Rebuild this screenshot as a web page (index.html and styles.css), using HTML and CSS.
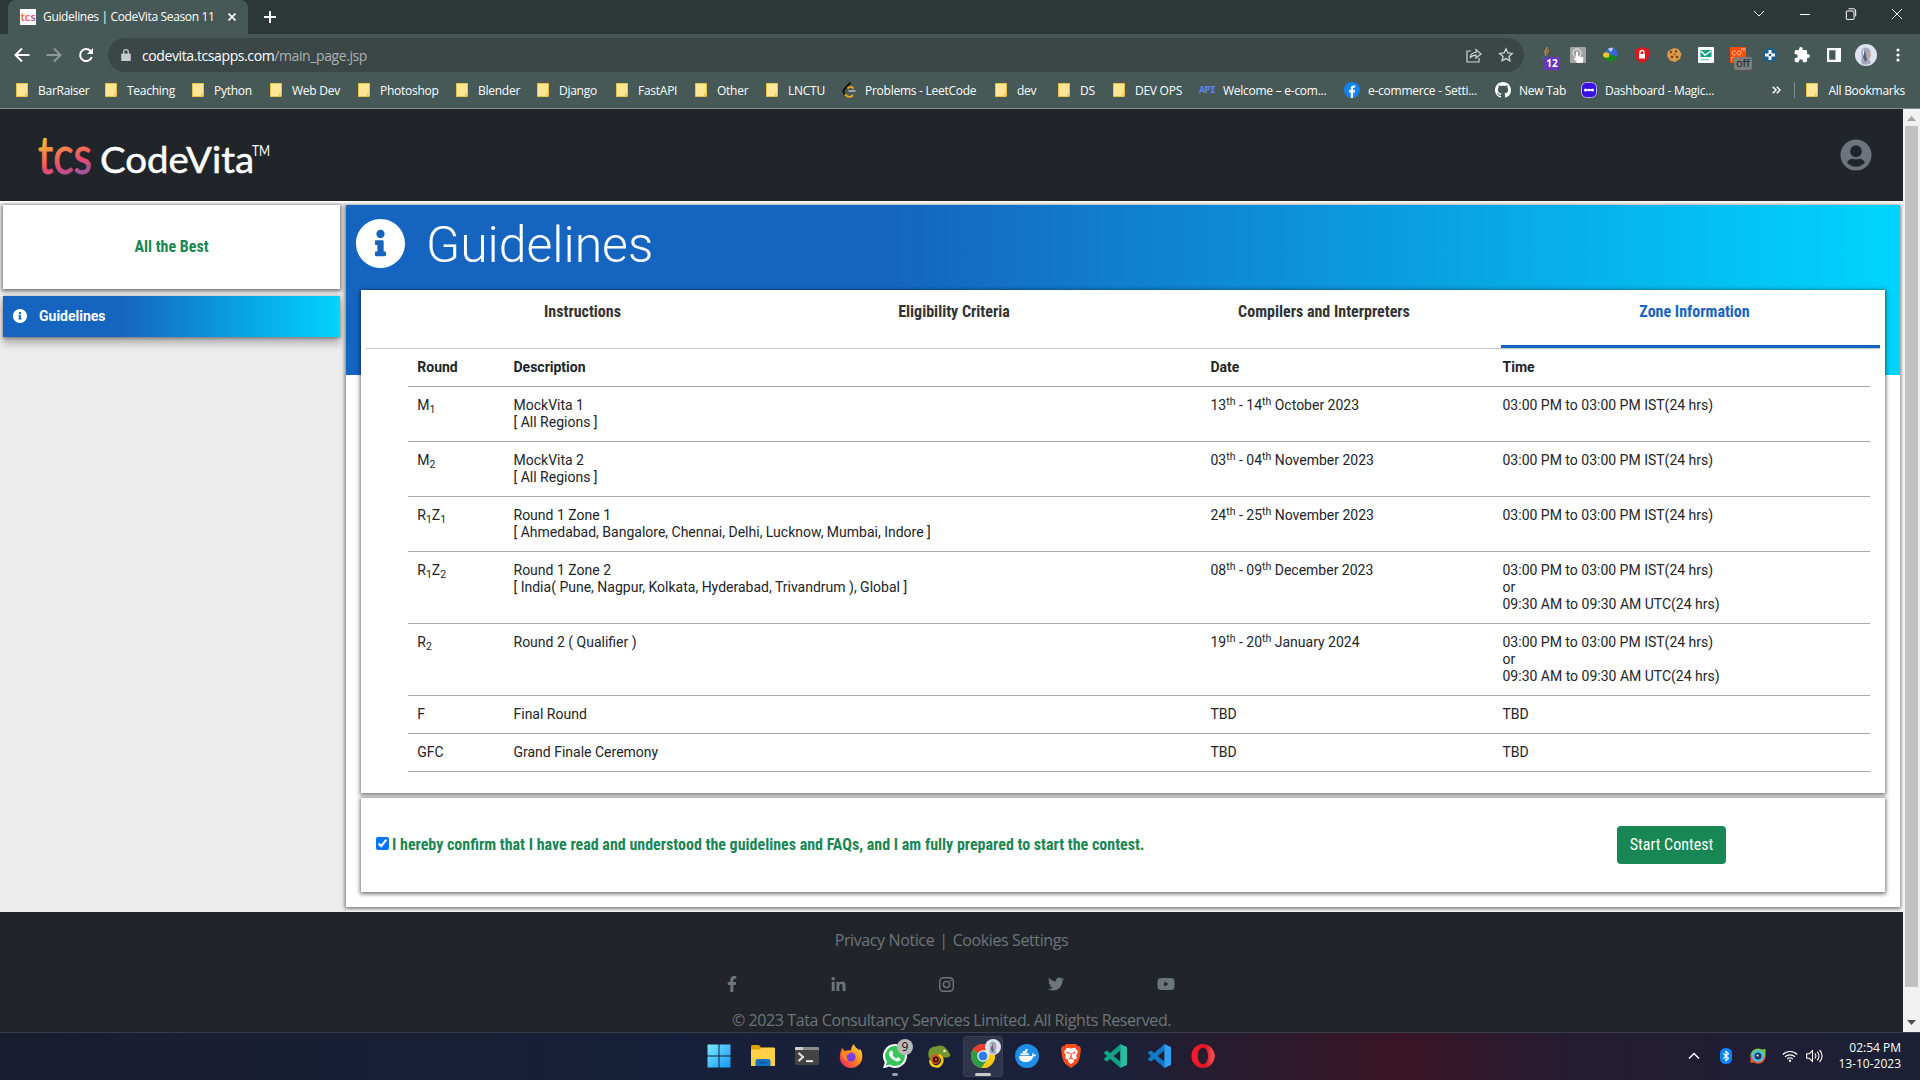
FILE: index.html
```html
<!DOCTYPE html>
<html lang="en">
<head>
<meta charset="utf-8">
<title>Guidelines | CodeVita Season 11</title>
<link rel="stylesheet" href="styles.css">
</head>
<body>
<svg class="defs" width="0" height="0" aria-hidden="true">
  <defs>
    <linearGradient id="gTcs" x1="0" y1="0" x2="1" y2="1"><stop offset="0" stop-color="#fdb827"/><stop offset=".35" stop-color="#f3704b"/><stop offset=".62" stop-color="#ee4a7d"/><stop offset=".85" stop-color="#7b57a5"/><stop offset="1" stop-color="#d14b8d"/></linearGradient>
    <linearGradient id="gLogo" gradientUnits="userSpaceOnUse" x1="14" y1="18" x2="26" y2="58"><stop offset="0" stop-color="#fdc52b"/><stop offset=".35" stop-color="#f5804a"/><stop offset=".7" stop-color="#ee4a70"/><stop offset="1" stop-color="#a455a0"/></linearGradient>
    <linearGradient id="gWin" x1="0" y1="0" x2="1" y2="1"><stop offset="0" stop-color="#7ce8ff"/><stop offset="1" stop-color="#1597f5"/></linearGradient>
    <linearGradient id="gFox" x1="1" y1="0" x2="0" y2="1"><stop offset="0" stop-color="#fff04a"/><stop offset=".45" stop-color="#ff8a1e"/><stop offset="1" stop-color="#f5156c"/></linearGradient>
    <linearGradient id="gOpera" x1="0" y1="0" x2="1" y2="0"><stop offset="0" stop-color="#ff1b2d"/><stop offset=".6" stop-color="#e01225"/><stop offset="1" stop-color="#ff5a5a"/></linearGradient>
    <symbol id="folder" viewBox="0 0 12 14"><path d="M.5.5h11v10.3h-.9v2.7H.5z" fill="#ffe694" stroke="#e9c24a"/><path d="M9.5 13.2v-2.4h2v2.4z" fill="#ffe694" stroke="#e9c24a"/></symbol>
    <symbol id="info" viewBox="8 8 496 496"><path fill="#fff" d="M256 8C119.043 8 8 119.083 8 256c0 136.997 111.043 248 248 248s248-111.003 248-248C504 119.083 392.957 8 256 8zm0 110c23.196 0 42 18.804 42 42s-18.804 42-42 42-42-18.804-42-42 18.804-42 42-42zm56 254c0 6.627-5.373 12-12 12h-88c-6.627 0-12-5.373-12-12v-24c0-6.627 5.373-12 12-12h12v-64h-12c-6.627 0-12-5.373-12-12v-24c0-6.627 5.373-12 12-12h64c6.627 0 12 5.373 12 12v100h12c6.627 0 12 5.373 12 12v24z"/></symbol>
    <symbol id="vscode" viewBox="0 0 24 24"><path d="M17.5 0v6.2L4.2 17.6l-3-1.6-.1-1.5z" /><path d="M17.5 24v-6.2L4.2 6.4l-3 1.6-.1 1.5z" /><path class="vs-side" d="M17.3 0 24 3v18l-6.7 3z"/></symbol>
    <symbol id="avatar" viewBox="0 0 22 22"><circle cx="11" cy="11" r="11" fill="#dfe3f0"/><path d="M7 20c-1-3-1-5 0-7-1-3-1-7 1-9 2-1 5-1 7 2l1 6-2 3 2 4c-3 2-6 2-9 1z" fill="#a3a9bb"/><path d="M10 6l1 6 1 4-2 2-2-5z" fill="#566079"/><path d="M13 8c2 0 3 2 2 5l-2 1z" fill="#d7a08d"/><path d="M8 3l1 6-1 3z" fill="#f6f7fb"/></symbol>
  </defs>
</svg>

<div class="screen">
  <header class="tabstrip">
    <div class="tab">
      <svg class="favicon" width="16" height="16" viewBox="0 0 16 16"><path fill="#fff" d="M0 0h16v16H0z"/><text x="0.5" y="12" textLength="15" lengthAdjust="spacingAndGlyphs" class="fav-text">tcs</text></svg>
      <span class="tab-title">Guidelines | CodeVita Season 11</span>
      <svg width="8" height="8" viewBox="0 0 8 8"><path d="M.5.5l7 7M7.5.5l-7 7" stroke="#fff" stroke-width="1.6"/></svg>
    </div>
    <svg class="newtab" width="12" height="12" viewBox="0 0 12 12"><path d="M6 0v12M0 6h12" stroke="#fff" stroke-width="2"/></svg>
    <div class="winctl">
      <svg width="12" height="12" viewBox="0 0 12 12"><path d="M1 3l5 5 5-5" fill="none" stroke="#fff"/></svg>
      <svg width="12" height="12" viewBox="0 0 12 12"><path d="M1 6.5h10" stroke="#fff"/></svg>
      <svg width="12" height="12" viewBox="0 0 12 12"><path d="M3.5.8h5a2.2 2.2 0 0 1 2.2 2.2v5.5M1.5 3h6.800a.7.7 0 0 1 .7.7v7a.7.700 0 0 1-.7.7H2a.7.700 0 0 1-.7-.7V3.500z" fill="none" stroke="#fff"/></svg>
      <svg width="12" height="12" viewBox="0 0 12 12"><path d="M1 1l10 10M11 1L1 11" stroke="#fff"/></svg>
    </div>
  </header>

  <div class="toolbar">
    <div class="nav">
      <svg width="16" height="16" viewBox="0 0 16 16"><path d="M15.500 8H2M8 1.500L1.500 8 8 14.500" fill="none" stroke="#fff" stroke-width="2"/></svg>
      <svg width="16" height="16" viewBox="0 0 16 16"><path d="M.5 8H14M8 1.500L14.500 8 8 14.500" fill="none" stroke="#8d9a99" stroke-width="2"/></svg>
      <svg width="16" height="16" viewBox="0 0 16 16"><path d="M13.800 10A6 6 0 1 1 12.600 4.100L14 5.500" fill="none" stroke="#fff" stroke-width="2"/><path d="M15 1v6H9z" fill="#fff"/></svg>
    </div>
    <div class="omnibox">
      <svg width="10" height="12" viewBox="0 0 10 12"><path d="M1 4.500h8a.8.8 0 0 1 .8.8v6a.7.700 0 0 1-.7.7H.9a.7.700 0 0 1-.7-.7v-6A.8.800 0 0 1 1 4.500z" fill="#c5caca"/><path d="M2.700 5V3a2.300 2.300 0 0 1 4.600 0v2" fill="none" stroke="#c5caca" stroke-width="1.300"/></svg>
      <span class="url">codevita.tcsapps.com<span class="path">/main_page.jsp</span></span>
      <div class="omni-actions">
        <svg width="16" height="16" viewBox="0 0 16 16"><path d="M5 4H1v11h12v-4M4 11c.5-3.500 3-5.500 6-5.500V2.500L15 7l-5 4V8.200C7.500 8.200 5.500 9 4 11z" fill="none" stroke="#d0d5d4" stroke-width="1.200"/></svg>
        <svg width="16" height="16" viewBox="0 0 16 16"><path d="M8 1.800l1.900 4.100 4.400.5-3.300 3 .9 4.400L8 11.600l-3.900 2.200.9-4.400-3.300-3 4.400-.5z" fill="none" stroke="#d0d5d4" stroke-width="1.300"/></svg>
      </div>
    </div>
    <div class="exts">
      <span class="ext"><svg width="16" height="16" viewBox="0 0 16 16"><path d="M9 0c1 2-3 3.500-2 6 .8 1.500 1 2 .5 3M11 3C8.500 4.500 8.500 5.500 9.500 7" fill="none" stroke="#e08a2a" stroke-width="1.200"/><path d="M3 10.500h4M4 13h3" stroke="#2a7b8c"/></svg><b class="badge badge-count">12</b></span>
      <span class="ext"><svg width="16" height="16" viewBox="0 0 16 16"><rect width="16" height="16" rx="1" fill="#a3a3a3"/><circle cx="7" cy="6" r="4" fill="none" stroke="#d8d8d8" stroke-width="1.500"/><path d="M6 5.500c0-1.500 2-1.500 2 0V9l4.500 1.200c1 .3 1 1 .8 2L12.500 16H7l-3-4.500c0-1 1-1.200 2-.3z" fill="#fff"/></svg></span>
      <span class="ext"><svg width="16" height="16" viewBox="0 0 16 16"><circle cx="9.500" cy="6.500" r="6" fill="#3568d4"/><path d="M6 2c2-1.500 4-1.500 5-.8L9 5z" fill="#bcd8ff"/><path d="M1 7c2-3 5-2 8 1v5c-4 0-8-2-8-6z" fill="#e8c82a"/><path d="M0 9c3 2 5 2 7 1V7l9 3-8 6-1-3c-3 0-6-1-7-4z" fill="#168a1c"/></svg></span>
      <span class="ext"><svg width="16" height="16" viewBox="0 0 16 16"><path d="M8 0l7 2.500V8c0 4-3 6.500-7 8-4-1.500-7-4-7-8V2.500z" fill="#e4141c"/><rect x="5" y="7" width="6" height="4.500" fill="#fff"/><path d="M6 7V5.500a2 2 0 0 1 4 0V7" fill="none" stroke="#fff" stroke-width="1.300"/></svg></span>
      <span class="ext"><svg width="16" height="16" viewBox="0 0 16 16"><path d="M8 1l4.500 1 3 5-1.500 5-5 3-5-1.500L1 9l1-5z" fill="#dc9a48"/><g fill="#71401d"><circle cx="5" cy="5" r="1.200"/><circle cx="10" cy="4.500" r="1.200"/><circle cx="6" cy="10" r="1.300"/><circle cx="11" cy="10" r="1.300"/><circle cx="8.500" cy="7.500" r=".8"/></g></svg></span>
      <span class="ext"><svg width="16" height="16" viewBox="0 0 16 16"><rect width="16" height="16" rx="1" fill="#fff"/><path d="M2.500 3h11v7h-11z" fill="#12a183"/><path d="M3 4l4 4 6-4" fill="none" stroke="#fff" stroke-width="1.400"/><path d="M3 12.500h8" stroke="#8fc9c0" stroke-width="1.500"/></svg></span>
      <span class="ext"><svg width="16" height="16" viewBox="0 0 16 16"><path d="M0 0h16v16H0z" fill="#ff4a08"/><path d="M5.500 4.500a2 2 0 1 0 0 3" fill="none" stroke="#ffc0a0"/><circle cx="9" cy="6" r="2" fill="none" stroke="#ffc0a0"/><path d="M11.500 4V1.500H15V4M13.200 2v2M1.500 14v-3.500H4" fill="none" stroke="#ffc0a0" stroke-width=".8"/></svg><b class="badge badge-off">off</b></span>
      <span class="ext"><svg width="16" height="16" viewBox="0 0 16 16"><circle cx="8" cy="8" r="7" fill="#175e93"/><path d="M6.500 3h3v3.500H13v3H9.500V13h-3V9.500H3v-3h3.500z" fill="#fff"/><circle cx="8" cy="8" r="1.300" fill="#175e93"/></svg></span>
      <span class="ext"><svg width="16" height="16" viewBox="1 1 22 22"><path fill="#fff" d="M20.500 11H19V7c0-1.100-.9-2-2-2h-4V3.500a2.500 2.500 0 0 0-5 0V5H4c-1.100 0-1.990.9-1.990 2v3.800H3.500c1.490 0 2.700 1.210 2.700 2.700s-1.210 2.700-2.700 2.700H2V20c0 1.100.9 2 2 2h3.800v-1.500c0-1.490 1.210-2.700 2.700-2.700 1.490 0 2.700 1.210 2.700 2.700V22H17c1.100 0 2-.9 2-2v-4h1.500a2.500 2.500 0 0 0 0-5z"/></svg></span>
      <span class="ext"><svg width="14" height="14" viewBox="0 0 14 14"><path fill="#fff" fill-rule="evenodd" d="M0 0h14v14H0zm2.200 2.200v9.600h6.300V2.200z"/></svg></span>
      <span class="ext"><svg width="22" height="22"><use href="#avatar"/></svg></span>
      <span class="ext"><svg width="4" height="16" viewBox="0 0 4 16"><g fill="#fff"><circle cx="2" cy="3" r="1.600"/><circle cx="2" cy="8" r="1.600"/><circle cx="2" cy="13" r="1.600"/></g></svg></span>
    </div>
  </div>

  <nav class="bookmarks">
    <div class="bm-list">
      <a class="bm"><svg class="fd"><use href="#folder"/></svg>BarRaiser</a>
      <a class="bm"><svg class="fd"><use href="#folder"/></svg>Teaching</a>
      <a class="bm"><svg class="fd"><use href="#folder"/></svg>Python</a>
      <a class="bm"><svg class="fd"><use href="#folder"/></svg>Web Dev</a>
      <a class="bm"><svg class="fd"><use href="#folder"/></svg>Photoshop</a>
      <a class="bm"><svg class="fd"><use href="#folder"/></svg>Blender</a>
      <a class="bm"><svg class="fd"><use href="#folder"/></svg>Django</a>
      <a class="bm"><svg class="fd"><use href="#folder"/></svg>FastAPI</a>
      <a class="bm"><svg class="fd"><use href="#folder"/></svg>Other</a>
      <a class="bm"><svg class="fd"><use href="#folder"/></svg>LNCTU</a>
      <a class="bm"><svg class="fv" viewBox="0 0 16 16"><path d="M9.500.5L4 6.500C2 8.500 2 10.500 4 12.500" fill="none" stroke="#111" stroke-width="1.900"/><path d="M12.500 6.500c-2-2-4-2.200-6 0M4 12.200l2 1.800c2 1.500 4 1 6-1" fill="none" stroke="#f5a21b" stroke-width="1.900"/><path d="M7.500 9h7" stroke="#b3b3b3" stroke-width="1.600"/></svg>Problems - LeetCode</a>
      <a class="bm"><svg class="fd"><use href="#folder"/></svg>dev</a>
      <a class="bm"><svg class="fd"><use href="#folder"/></svg>DS</a>
      <a class="bm"><svg class="fd"><use href="#folder"/></svg>DEV OPS</a>
      <a class="bm"><span class="api">API</span>Welcome – e-com...</a>
      <a class="bm"><svg class="fv" viewBox="0 0 16 16"><circle cx="8" cy="8" r="8" fill="#1283f5"/><path d="M6.800 16v-5.400H4.900V8.300h1.900V6.600c0-2 1.200-3.100 3-3.100.8 0 1.500.1 1.500.1v1.900h-1c-.9 0-1.200.6-1.200 1.200v1.600h2.200l-.4 2.300H9.100V16z" fill="#fff"/></svg>e-commerce - Setti...</a>
      <a class="bm"><svg class="fv" viewBox="0 0 16 16"><path fill="#fff" d="M8 0C3.580 0 0 3.580 0 8c0 3.540 2.290 6.530 5.470 7.590.4.07.55-.17.55-.38 0-.19-.01-.82-.01-1.490-2.010.37-2.530-.49-2.690-.94-.09-.23-.48-.94-.82-1.130-.28-.15-.68-.52-.01-.53.63-.01 1.080.58 1.230.82.72 1.210 1.870.87 2.330.66.07-.52.28-.87.51-1.070-1.780-.2-3.640-.89-3.640-3.950 0-.87.31-1.590.82-2.150-.08-.2-.36-1.020.08-2.120 0 0 .67-.21 2.200.82.64-.18 1.320-.27 2-.27s1.360.09 2 .27c1.530-1.040 2.200-.82 2.200-.82.44 1.100.16 1.920.08 2.120.51.56.82 1.270.82 2.150 0 3.070-1.870 3.750-3.650 3.950.29.25.54.73.54 1.480 0 1.070-.01 1.930-.01 2.200 0 .21.15.46.55.38A8.010 8.010 0 0 0 16 8c0-4.420-3.580-8-8-8z"/></svg>New Tab</a>
      <a class="bm"><svg class="fv" viewBox="0 0 16 16"><rect x=".5" y=".5" width="15" height="15" rx="5" fill="#3a10e5" stroke="#b9b2e8"/><path d="M4 8h8" stroke="#fff" stroke-width="1.500"/><circle cx="4.500" cy="8" r="1.500" fill="#fff"/><circle cx="8" cy="8" r="1.300" fill="#fff"/><circle cx="11.500" cy="8" r="1.500" fill="#fff"/></svg>Dashboard - Magic...</a>
    </div>
    <div class="bm-end">
      <svg width="9" height="8" viewBox="0 0 9 8"><path d="M.8.8L4 4 .8 7.200M4.800.8L8 4 4.800 7.200" fill="none" stroke="#fff" stroke-width="1.500"/></svg>
      <span class="bm-sep"></span>
      <a class="bm"><svg class="fd"><use href="#folder"/></svg>All Bookmarks</a>
    </div>
  </nav>

  <div class="viewport">
    <div class="page">
      <header class="site-head">
        <svg class="logo" width="240" height="72" viewBox="0 0 240 72">
          <text class="logo-tcs" x="0" y="54.500" textLength="54" lengthAdjust="spacingAndGlyphs">tcs</text>
          <text class="logo-cv" x="62" y="54" textLength="154" lengthAdjust="spacingAndGlyphs">CodeVita</text>
          <text class="logo-tm" x="214" y="37" textLength="18" lengthAdjust="spacingAndGlyphs">TM</text>
        </svg>
        <svg width="32" height="32" viewBox="0 0 32 32"><path fill="#6c757d" fill-rule="evenodd" d="M16 .5a15.500 15.500 0 1 0 0 31 15.500 15.500 0 0 0 0-31zm0 5.700a5.800 6 0 1 1 0 12 5.800 6 0 0 1 0-12zM7 23.500c2-3.500 4.500-3.800 6-3.800 2 .8 4 .8 6 0 1.500 0 4 .3 6 3.800-4.500 5.700-13.500 5.700-18 0z"/></svg>
      </header>

      <main class="body">
        <aside class="side">
          <div class="card wish">All the Best</div>
          <a class="side-item"><svg width="14" height="14"><use href="#info"/></svg>Guidelines</a>
        </aside>
        <section class="card main">
          <h1 class="title"><svg width="49" height="49"><use href="#info"/></svg><span>Guidelines</span></h1>
          <div class="card info">
            <ul class="tabs">
              <li>Instructions</li><li>Eligibility Criteria</li><li>Compilers and Interpreters</li><li class="on">Zone Information</li>
            </ul>
            <table class="zones">
              <colgroup><col class="c1"><col class="c2"><col class="c3"><col class="c4"></colgroup>
              <tr><th>Round</th><th>Description</th><th>Date</th><th>Time</th></tr>
              <tr><td>M<sub>1</sub></td><td>MockVita 1<br>[ All Regions ]</td><td>13<sup>th</sup> - 14<sup>th</sup> October 2023</td><td>03:00 PM to 03:00 PM IST(24 hrs)</td></tr>
              <tr><td>M<sub>2</sub></td><td>MockVita 2<br>[ All Regions ]</td><td>03<sup>th</sup> - 04<sup>th</sup> November 2023</td><td>03:00 PM to 03:00 PM IST(24 hrs)</td></tr>
              <tr><td>R<sub>1</sub>Z<sub>1</sub></td><td>Round 1 Zone 1<br>[ Ahmedabad, Bangalore, Chennai, Delhi, Lucknow, Mumbai, Indore ]</td><td>24<sup>th</sup> - 25<sup>th</sup> November 2023</td><td>03:00 PM to 03:00 PM IST(24 hrs)</td></tr>
              <tr><td>R<sub>1</sub>Z<sub>2</sub></td><td>Round 1 Zone 2<br>[ India( Pune, Nagpur, Kolkata, Hyderabad, Trivandrum ), Global ]</td><td>08<sup>th</sup> - 09<sup>th</sup> December 2023</td><td>03:00 PM to 03:00 PM IST(24 hrs)<br>or<br>09:30 AM to 09:30 AM UTC(24 hrs)</td></tr>
              <tr><td>R<sub>2</sub></td><td>Round 2 ( Qualifier )</td><td>19<sup>th</sup> - 20<sup>th</sup> January 2024</td><td>03:00 PM to 03:00 PM IST(24 hrs)<br>or<br>09:30 AM to 09:30 AM UTC(24 hrs)</td></tr>
              <tr><td>F</td><td>Final Round</td><td>TBD</td><td>TBD</td></tr>
              <tr><td>GFC</td><td>Grand Finale Ceremony</td><td>TBD</td><td>TBD</td></tr>
            </table>
          </div>
          <div class="card confirm">
            <label class="agree"><input type="checkbox" checked>I hereby confirm that I have read and understood the guidelines and FAQs, and I am fully prepared to start the contest.</label>
            <button class="start">Start Contest</button>
          </div>
        </section>
      </main>

      <footer class="site-foot">
        <div class="links"><span>Privacy Notice</span><span>|</span><span>Cookies Settings</span></div>
        <div class="social">
          <svg width="10" height="16" viewBox="0 0 320 512"><path d="M279.140 288l14.220-92.660h-88.910v-60.130c0-25.350 12.420-50.060 52.240-50.060h40.420V6.260S260.430 0 225.360 0c-73.220 0-121.080 44.380-121.080 124.720v70.620H22.890V288h81.390v224h100.170V288z"/></svg>
          <svg width="15" height="16" viewBox="0 -32 448 512"><path d="M100.280 448H7.400V148.900h92.880zM53.790 108.100C24.090 108.100 0 83.500 0 53.800a53.790 53.790 0 0 1 107.580 0c0 29.700-24.100 54.300-53.790 54.300zM447.900 448h-92.680V302.400c0-34.700-.7-79.200-48.290-79.200-48.290 0-55.690 37.700-55.690 76.700V448h-92.780V148.900h89.080v40.800h1.300c12.400-23.500 42.690-48.300 87.880-48.300 94 0 111.280 61.900 111.280 142.300V448z"/></svg>
          <svg width="15" height="15" viewBox="0 0 15 15"><rect x=".7" y=".7" width="13.600" height="13.600" rx="3.700" fill="none" stroke="#6c757d" stroke-width="1.400"/><circle cx="7.500" cy="7.500" r="3.100" fill="none" stroke="#6c757d" stroke-width="1.400"/><circle cx="11.500" cy="3.500" r=".9"/></svg>
          <svg width="16" height="16" viewBox="0 0 512 512"><path d="M459.370 151.716c.325 4.548.325 9.097.325 13.645 0 138.720-105.583 298.558-298.558 298.558-59.452 0-114.680-17.219-161.137-47.106 8.447.974 16.568 1.299 25.340 1.299 49.055 0 94.213-16.568 130.274-44.832-46.132-.975-84.792-31.188-98.112-72.772 6.498.974 12.995 1.624 19.818 1.624 9.421 0 18.843-1.300 27.614-3.573-48.081-9.747-84.143-51.980-84.143-102.985v-1.299c13.969 7.797 30.214 12.670 47.431 13.319-28.264-18.843-46.781-51.005-46.781-87.391 0-19.492 5.197-37.360 14.294-52.954 51.655 63.675 129.300 105.258 216.365 109.807-1.624-7.797-2.599-15.918-2.599-24.040 0-57.828 46.782-104.934 104.934-104.934 30.213 0 57.502 12.670 76.670 33.137 23.715-4.548 46.456-13.320 66.599-25.340-7.798 24.366-24.366 44.833-46.132 57.827 21.117-2.273 41.584-8.122 60.426-16.243-14.292 20.791-32.161 39.308-52.628 54.253z"/></svg>
          <svg width="18" height="16" viewBox="0 0 576 512"><path d="M549.655 124.083c-6.281-23.650-24.787-42.276-48.284-48.597C458.781 64 288 64 288 64S117.220 64 74.629 75.486c-23.497 6.322-42.003 24.947-48.284 48.597-11.412 42.867-11.412 132.305-11.412 132.305s0 89.438 11.412 132.305c6.281 23.650 24.787 41.500 48.284 47.821C117.220 448 288 448 288 448s170.780 0 213.371-11.486c23.497-6.321 42.003-24.171 48.284-47.821 11.412-42.867 11.412-132.305 11.412-132.305s0-89.438-11.412-132.305zm-317.510 213.508V175.185l142.739 81.205-142.739 81.201z"/></svg>
        </div>
        <p class="copy">© 2023 Tata Consultancy Services Limited. All Rights Reserved.</p>
      </footer>
    </div>
    <div class="scroll">
      <svg width="9" height="5" viewBox="0 0 9 5"><path d="M4.500 0L9 5H0z" fill="#a3a3a3"/></svg>
      <span class="thumb"></span>
      <svg width="9" height="5" viewBox="0 0 9 5"><path d="M4.500 5L0 0h9z" fill="#505050"/></svg>
    </div>
  </div>

  <footer class="taskbar">
    <div class="apps">
      <span class="app"><svg width="24" height="24" viewBox="0 0 24 24"><path fill="url(#gWin)" d="M.5.500h11v11H.5zM12.500.5h11v11h-11zM.5 12.500h11v11H.5zM12.500 12.500h11v11h-11z"/></svg></span>
      <span class="app"><svg width="24" height="24" viewBox="0 0 24 24"><path d="M0 2.500A1.500 1.500 0 0 1 1.500 1H8l2 2.500h12.500A1.500 1.500 0 0 1 24 5v6H0z" fill="#e0a100"/><path d="M0 5.500h8.500l2-1.700H23a1 1 0 0 1 1 1V22H0z" fill="#ffcf48"/><path d="M4.500 22v-4.500a2.500 2.500 0 0 1 2.500-2.500h10a2.500 2.500 0 0 1 2.500 2.500V22z" fill="#1172c4"/><path d="M8 18.700h8" stroke="#0b4f8f" stroke-width="1.200"/></svg></span>
      <span class="app"><svg width="24" height="24" viewBox="0 0 24 24"><rect y="3" width="24" height="18" rx="1.200" fill="#434343"/><path d="M0 6V4.200A1.200 1.200 0 0 1 1.200 3h21.600A1.200 1.200 0 0 1 24 4.200V6z" fill="#8c8c8c"/><path d="M0 6V4.200A1.200 1.200 0 0 1 1.200 3H8v3z" fill="#cfcfcf"/><path d="M3.500 9l4.500 4-4.500 4" fill="none" stroke="#ddd" stroke-width="2.200"/><path d="M11 17.200h7" stroke="#fff" stroke-width="1.800"/></svg></span>
      <span class="app"><svg width="24" height="24" viewBox="0 0 24 24"><path d="M3 4l3 3c2-1 4-1 6-.5C12 3 13.500 1.500 15 0c.5 3 3 4 5 6l1-1c2 2.500 2.500 6 2.300 8.500C22.800 19.500 18 24 12 24S.8 19.500.8 13C.8 9 2 7 3 4z" fill="url(#gFox)"/><circle cx="12" cy="13" r="4.600" fill="#7a3fe0"/><path d="M3 8c3-1.500 6-1 9.500 1-3 0-3.500 1.500-5 2.500-.5 2 .5 4 2 5-4 .5-7-2.500-6.500-8.500z" fill="#ff8a1e"/></svg></span>
      <span class="app"><svg width="24" height="24" viewBox="0 0 24 24"><path d="M12 0a12 12 0 1 1-5.700 22.600L0 24.500l1.800-6.200A12 12 0 0 1 12 0z" fill="#fff"/><path d="M12 2a10 10 0 1 1-5.300 18.500L2.700 21.700l1.300-3.900A10 10 0 0 1 12 2z" fill="#35c65a"/><path d="M8 6.500c1-.4 1.500.1 2.300 2.500.2.700-.8 1.400-.8 1.700.8 1.700 2.200 3 3.900 3.700.5 0 1.200-1.400 1.700-1.200 2.500 1.100 2.600 1.200 2.400 2.200-.7 2-3 2.300-4.800 1.700-3-1-5.700-3.500-6.700-6.300C5.600 9 6.800 6.900 8 6.500z" fill="#fff"/></svg><b class="count">9</b><i class="dot"></i></span>
      <span class="app"><svg width="24" height="24" viewBox="0 0 24 24"><path d="M1.500 12C.500 6 4 2 9 2.500c4-2 8-1 11 3l3.500 5.500-1.500 2c-4 1.500-7-.5-9.500 1-4-3.500-8-1-7.500 3-2-1-3-3-3.500-5z" fill="#76962f"/><path d="M3.500 16a5.800 5.800 0 0 0 10.800 3.500 5.500 5.500 0 0 0-3-8.500" fill="none" stroke="#f6c81c" stroke-width="2.600"/><circle cx="8.600" cy="15.300" r="4.700" fill="#e8501e"/><circle cx="8.800" cy="15.500" r="3" fill="#2a1410"/><circle cx="9" cy="15.500" r="1.300" fill="#e8501e"/><circle cx="17.500" cy="7" r="1.300" fill="#e9efc8"/></svg></span>
      <span class="app active"><svg width="24" height="24" viewBox="0 0 24 24"><circle cx="12" cy="12" r="12" fill="#e8ad1a"/><path d="M12 12L1.600 6A12 12 0 0 1 22.400 6H12z" fill="#e43e31"/><path d="M1.600 6A12 12 0 0 0 10.500 23.900L17 15l-5-3z" fill="#2c9c4b"/><path d="M12 6.500h10.700A12 12 0 0 1 10.500 23.900L16.800 14.800z" fill="#fbc916"/><circle cx="12" cy="12" r="5.700" fill="#fff"/><circle cx="12" cy="12" r="4.500" fill="#2f7bee"/></svg><svg class="who" width="16" height="16"><use href="#avatar"/></svg><i class="bar"></i></span>
      <span class="app"><svg width="24" height="24" viewBox="0 0 24 24"><circle cx="12" cy="12" r="12" fill="#1d8fe8"/><path d="M4 12h13c.6-1 .5-2 .1-3 1-.2 1.700.7 2 1.600 1-.1 1.700 0 2 .3-.5 1.200-1.700 1.500-2.700 1.500C17 16.500 14 18 10.500 18 6 18 4 15.500 4 12z" fill="#fff"/><path d="M5.500 9.300h8.300v2H5.500zM7.700 7h4v2h-4zM10.500 5h2v2h-2z" fill="#fff"/></svg></span>
      <span class="app"><svg width="24" height="24" viewBox="0 0 24 24"><path d="M7 0h10l2 2.200h2l1 3.800-.5 2c-.5 6-2 10-4 12L12 24l-5.500-4c-2-2-3.500-6-4-12L2 6l1-3.800h2z" fill="#fb4a1e"/><path d="M12 4.500l4-.8 3 4-2 4 1 2.500-3.500 1.500.5 2L12 20l-3-2.300.5-2L6 14.200l1-2.500-2-4 3-4z" fill="#fff"/><path d="M7.500 8.200l3 1.300M16.500 8.200l-3 1.300M12 9v4.500M10 15l2-1 2 1" stroke="#fb4a1e" stroke-width="1.300" fill="none"/></svg></span>
      <span class="app"><svg class="vs-green" width="24" height="24"><use href="#vscode"/></svg></span>
      <span class="app"><svg class="vs-blue" width="24" height="24"><use href="#vscode"/></svg></span>
      <span class="app"><svg width="24" height="24" viewBox="0 0 24 24"><path fill="url(#gOpera)" fill-rule="evenodd" d="M12 0a11.500 12 0 1 0 0 24 11.500 12 0 0 0 0-24zm0 3.800c3 0 5 3.500 5 8.200s-2 8.200-5 8.200-5.200-3.500-5.200-8.200S9 3.800 12 3.800z"/></svg></span>
    </div>
    <div class="tray">
      <svg width="12" height="8" viewBox="0 0 12 8"><path d="M1 6.500l5-5 5 5" fill="none" stroke="#fff" stroke-width="1.500"/></svg>
      <svg width="12" height="16" viewBox="0 0 12 16"><rect width="12" height="16" rx="5.500" fill="#0a84ff"/><path d="M3.300 5.300l5.200 5L6 12.700V3.300l2.500 2.400-5.200 5" fill="none" stroke="#fff" stroke-width="1.100"/></svg>
      <svg width="16" height="16" viewBox="0 0 16 16"><path d="M.5 8C.5 2 7-1.500 12 1.500l3.500-.5v8z" fill="#76c83e"/><path d="M.5 7v8l3.500-.5c5 3 11 0 11.500-6z" fill="#f0592b"/><circle cx="8" cy="8" r="6" fill="#4cc0ee"/><circle cx="8" cy="8" r="3.500" fill="#173a5e"/><circle cx="7.500" cy="7.500" r="1.100" fill="#fff"/></svg>
      <svg width="16" height="12" viewBox="0 0 16 12"><path d="M.8 4.500a10.200 10.200 0 0 1 14.400 0M3 6.900a7 7 0 0 1 10 0M5.200 9.100a4 4 0 0 1 5.600 0" fill="none" stroke="#fff" stroke-width="1.200"/><circle cx="8" cy="10.800" r="1.200" fill="#fff"/></svg>
      <svg width="17" height="14" viewBox="0 0 17 14"><path d="M.7 4.700h2.600L6.500 1.500v11L3.300 9.300H.7z" fill="none" stroke="#fff" stroke-width="1.100"/><path d="M8.800 4.500a3.500 3.500 0 0 1 0 5M11.200 2.700a6 6 0 0 1 0 8.600M13.600 1a8.500 8.500 0 0 1 0 12" fill="none" stroke="#fff" stroke-width="1.100"/></svg>
      <div class="clock"><span>02:54 PM</span><span>13-10-2023</span></div>
    </div>
  </footer>
</div>
</body>
</html>
```
FILE: styles.css
```css
* { box-sizing: border-box; }
body { margin: 0; font-family: "Open Sans", sans-serif; color: #212529; overflow: hidden; }
svg { display: block; flex: none; }
.defs { position: absolute; }
.screen { width: 1920px; height: 1080px; display: flex; flex-direction: column; }

/* browser tab strip */
.tabstrip { height: 34px; background: #2c3838; display: flex; align-items: flex-start; color: #fff; }
.tab { width: 240px; height: 34px; margin-left: 8px; padding: 0 0 1px 12px; border-radius: 8px 8px 0 0; background: #465957; display: flex; align-items: center; }
.tab-title { width: 192px; padding-left: 7px; font-size: 12px; letter-spacing: -.34px; white-space: nowrap; }
.fav-text { font: 700 12px Lato, sans-serif; fill: url(#gTcs); }
.newtab { margin: 11px 0 0 16px; }
.winctl { margin: 8px 17px 0 auto; display: flex; gap: 34px; }

/* address row */
.toolbar { height: 43px; background: #465957; display: flex; align-items: center; padding: 0 6px 1px 14px; }
.nav { display: flex; gap: 16px; margin-right: 14px; }
.omnibox { width: 1416px; height: 34px; border-radius: 17px; background: #3b4747; display: flex; align-items: center; padding: 0 10px 0 13px; }
.url { margin-left: 11px; font-size: 14px; letter-spacing: -.4px; color: #fff; }
.path { color: #a9b2b1; }
.omni-actions { margin-left: auto; display: flex; gap: 16px; }
.exts { margin-left: 6px; display: flex; }
.ext { width: 32px; height: 32px; display: flex; align-items: center; justify-content: center; position: relative; flex: none; }
.badge { position: absolute; font-size: 10px; line-height: 12px; height: 13px; border-radius: 2px; text-align: center; color: #fff; }
.badge-count { left: 14px; top: 18px; width: 16px; background: #6b35bd; }
.badge-off { left: 12px; top: 18px; width: 18px; background: #7d7d7d; color: #1b1b1b; font-weight: 400; font-size: 11px; line-height: 12px; }

/* bookmarks */
.bookmarks { height: 32px; background: #465957; border-bottom: 1px solid #7b8c89; display: flex; align-items: center; padding: 0 15px 5px 14px; color: #fff; }
.bm-list { display: grid; grid-template-columns: 89px 87px 78px 88px 98px 81px 79px 79px 71px 77px 152px 63px 55px 88px 145px 151px 86px 150px; }
.bm { display: flex; align-items: center; font-size: 12px; letter-spacing: -.26px; white-space: nowrap; }
.fd { width: 12px; height: 14px; margin: 0 10px 0 2px; }
.fv { width: 16px; height: 16px; margin-right: 8px; }
.api { width: 24px; font: 700 10px "Liberation Mono", monospace; letter-spacing: -.6px; color: #5b84f0; }
.bm-end { margin-left: auto; display: flex; align-items: center; }
.bm-sep { width: 1px; height: 16px; background: #7f8e8c; margin: 0 9px 0 13px; }

/* page */
.viewport { height: 923px; display: flex; }
.page { width: 1903px; height: 923px; background: #fff; overflow: hidden; }
.site-head { height: 92px; background: #212529; display: flex; align-items: center; justify-content: space-between; padding: 0 31px 0 38px; }
.logo-tcs { font: 400 52px Lato, sans-serif; fill: url(#gLogo); stroke: url(#gLogo); stroke-width: .8px; }
.logo-cv { font: 400 37px Lato, sans-serif; fill: #fff; stroke: #fff; stroke-width: .5px; }
.logo-tm { font: 400 15px Lato, sans-serif; fill: #fff; }
.card { background: #fff; box-shadow: 0 1px 4px 1px rgba(0, 0, 0, .55); }
.body { height: 711px; display: flex; padding: 4px 3px 5px 0; }
.side { width: 346px; margin: -2px 0 -5px; padding: 2px 6px 0 3px; background: #ededed; }
.wish { height: 84px; padding-bottom: 2px; display: flex; align-items: center; justify-content: center; font: 700 16px "Roboto Condensed", Roboto, sans-serif; color: #198754; }
.side-item { height: 41px; margin-top: 7px; padding: 0 10px 1px; display: flex; align-items: center; gap: 12px; font: 700 14px Roboto, sans-serif; color: #fff; background: linear-gradient(90deg, #1565c0 35%, #00d4ff); box-shadow: 0 1px 4px rgba(0, 0, 0, .45), 0 8px 7px rgba(0, 0, 0, .2); }
.main { width: 1554px; height: 702px; padding: 0 15px; background: linear-gradient(90deg, #1565c0 35%, #00d4ff) 0 0 / 100% 170px no-repeat #fff; }
.title { margin: 0 0 0 -5px; height: 85px; padding-bottom: 8px; display: flex; align-items: center; gap: 21px; font: 300 50px Roboto, sans-serif; letter-spacing: -.05px; color: #fff; }
.title span { padding-top: 3px; }
.info { height: 503px; padding: 0 5px; }
.tabs { list-style: none; margin: 0; height: 59px; padding: 0 0 0 38px; border-bottom: 1px solid #c8c8c8; display: grid; grid-template-columns: 357px 386px 354px 379px; font: 700 16px/24px "Roboto Condensed", Roboto, sans-serif; text-align: center; color: #333; }
.tabs li { padding-top: 10px; }
.tabs .on { height: 58px; padding-left: 8px; color: #1565c0; border-bottom: 3px solid #1565c0; }
.zones { width: 1462px; margin-left: 42px; table-layout: fixed; border-collapse: collapse; font: 400 14px/17px Roboto, sans-serif; }
.c1 { width: 97px; }
.c2 { width: 697px; }
.c3 { width: 292px; }
.c4 { width: 376px; }
.zones th, .zones td { padding: 10px 0 10px 8.5px; vertical-align: top; text-align: left; border-bottom: 1px solid #a9a9a9; }
.zones tr > :first-child { padding-left: 9.3px; }
.zones sub, .zones sup { font-size: .75em; line-height: 0; position: relative; vertical-align: baseline; }
.zones sub { bottom: -.25em; }
.zones sup { top: -.5em; }
.confirm { height: 94px; margin-top: 5px; padding: 0 159px 0 15px; display: flex; align-items: center; justify-content: space-between; }
.agree { padding-bottom: 2px; display: flex; align-items: center; font: 700 16px "Roboto Condensed", Roboto, sans-serif; color: #198754; }
.agree input { width: 13px; height: 13px; margin: 0 3px 1px 0; }
.start { width: 109px; height: 38px; padding: 0 0 2px; border: 0; border-radius: 4px; background: #198754; color: #fff; font: 400 16px "Roboto Condensed", Roboto, sans-serif; }

/* page footer */
.site-foot { height: 120px; background: #212529; color: #6c757d; fill: #6c757d; display: flex; flex-direction: column; align-items: center; font-size: 16px; line-height: 24px; padding-top: 16px; }
.links { display: flex; gap: 5px; letter-spacing: -.39px; }
.social { width: 448px; height: 16px; margin: 24px 0 0 -1px; display: flex; justify-content: space-between; align-items: center; }
.copy { margin: 16px 0 0; letter-spacing: -.4px; white-space: nowrap; }

/* page scrollbar */
.scroll { width: 17px; background: #f1f1f1; display: flex; flex-direction: column; align-items: center; padding: 7px 0; }
.thumb { width: 13px; height: 861px; margin: 5px 0 auto; background: #c1c1c1; }

/* taskbar */
.taskbar { height: 48px; background: linear-gradient(90deg, #191d30, #17203a 35%, #1b2038 58%, #2c1a2c 66%, #3a1424 73%, #241c32 82%, #1b2036); border-top: 1px solid #3b3f4c; display: flex; align-items: flex-start; padding-left: 697px; color: #fff; }
.apps { display: flex; }
.app { width: 44px; height: 46px; display: flex; align-items: center; justify-content: center; position: relative; }
.active::before { content: ""; position: absolute; inset: 3px 2px 2px; border-radius: 4px; background: rgba(255, 255, 255, .09); border: 1px solid rgba(255, 255, 255, .06); }
.active > svg { position: relative; }
.app .who { position: absolute; left: 24px; top: 6px; }
.count { position: absolute; left: 24px; top: 6px; width: 16px; height: 16px; border-radius: 8px; background: #b9b9b9; color: #111; font: 400 12px/16px "Open Sans", sans-serif; text-align: center; }
.dot, .bar { position: absolute; bottom: 3px; height: 3px; border-radius: 2px; }
.dot { left: 19px; width: 6px; background: #9a9ca6; }
.bar { left: 14px; width: 16px; background: #c9c9c6; }
.vs-green { fill: #14a085; --side: #25c0a4; }
.vs-blue { fill: #0f79c9; --side: #2ba3f0; }
.vs-side { fill: var(--side); }
.tray { height: 46px; margin: 0 19px 0 auto; display: flex; align-items: center; }
.tray svg:nth-of-type(1) { margin-right: 20px; }
.tray svg:nth-of-type(2) { margin-right: 18px; }
.tray svg:nth-of-type(3) { margin-right: 16px; }
.tray svg:nth-of-type(4) { margin-right: 8px; }
.clock { width: 78px; display: flex; flex-direction: column; align-items: flex-end; font-size: 12px; line-height: 16px; }
```
